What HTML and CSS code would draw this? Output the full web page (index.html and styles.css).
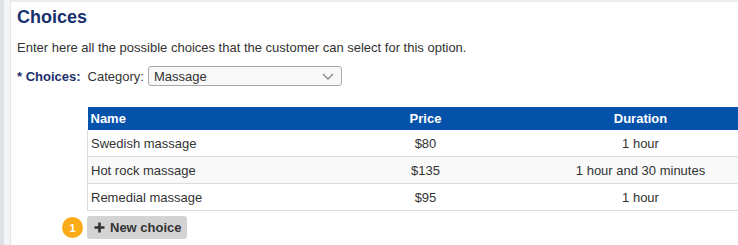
FILE: index.html
```html
<!DOCTYPE html>
<html>
<head>
<meta charset="utf-8">
<link rel="stylesheet" href="styles.css">
</head>
<body>
<div class="page">
  <div class="edge"></div>
  <div class="gutter"></div>
  <div class="panel">
    <h1 class="title">Choices</h1>
    <p class="desc">Enter here all the possible choices that the customer can select for this option.</p>
    <div class="field">
      <span class="label">* Choices:</span>
      <span class="cat">Category:</span>
      <div class="select">
        <span>Massage</span>
        <svg class="chev" width="12" height="7" viewBox="0 0 12 7"><path d="M1 1 L6 6 L11 1" fill="none" stroke="#8a8a8a" stroke-width="1.4"/></svg>
      </div>
    </div>
    <table class="choices">
      <colgroup><col class="c-name"><col class="c-price"><col class="c-dur"></colgroup>
      <thead>
        <tr><th class="left">Name</th><th>Price</th><th>Duration</th></tr>
      </thead>
      <tbody>
        <tr><td class="left">Swedish massage</td><td>$80</td><td>1 hour</td></tr>
        <tr class="alt"><td class="left">Hot rock massage</td><td>$135</td><td>1 hour and 30 minutes</td></tr>
        <tr><td class="left">Remedial massage</td><td>$95</td><td>1 hour</td></tr>
      </tbody>
    </table>
    <div class="actions">
      <span class="badge">1</span>
      <button class="btn"><svg width="11" height="11" viewBox="0 0 11 11"><path d="M5.5 0.5 V10.5 M0.5 5.5 H10.5" stroke="#333" stroke-width="2.6"/></svg><span>New choice</span></button>
    </div>
  </div>
</div>
</body>
</html>
```

FILE: styles.css
```css
html, body {
  margin: 0;
  padding: 0;
  background: #fff;
}
body {
  font-family: "Liberation Sans", Arial, sans-serif;
  font-size: 13px;
  color: #333;
  overflow: hidden;
}
.page {
  display: flex;
  width: 738px;
  height: 245px;
  overflow: hidden;
}
.edge {
  width: 4px;
  flex: none;
  background: #dfe0e5;
}
.gutter {
  width: 6px;
  flex: none;
  background: #f3f4f7;
}
.panel {
  flex: 1;
  min-width: 0;
  border-left: 1px solid #e4e5e8;
  border-top: 2px solid #ececec;
  padding-left: 6px;
  overflow: hidden;
}
.title {
  margin: 4px 0 0;
  font-size: 18px;
  line-height: 22px;
  font-weight: bold;
  color: #17306e;
}
.desc {
  margin: 11px 0 0;
  line-height: 18px;
}
.field {
  display: flex;
  align-items: center;
  margin-top: 9px;
  height: 20px;
}
.label {
  font-weight: bold;
  color: #1b2f6b;
  margin-right: 7px;
}
.cat {
  margin-right: 4px;
}
.select {
  box-sizing: border-box;
  width: 194px;
  height: 20px;
  border: 1px solid #a9a9a9;
  border-radius: 3px;
  background: #f8f8f8;
  display: flex;
  align-items: center;
  justify-content: space-between;
  padding: 0 7px 0 5px;
}
.chev {
  display: block;
}
.choices {
  margin: 21px 0 0 70px;
  border-collapse: collapse;
  table-layout: fixed;
  width: 663px;
}
.c-name { width: 233px; }
.c-price { width: 210px; }
.c-dur { width: 220px; }
.choices th {
  background: #0552ab;
  color: #fff;
  font-weight: bold;
  height: 23px;
  padding: 0 4px;
  text-align: center;
}
.choices th.left {
  padding-left: 3px;
}
.choices td {
  height: 26px;
  padding: 0 4px;
  text-align: center;
  border-bottom: 1px solid #dcdcdc;
}
.choices td.left {
  border-left: 1px solid #dcdcdc;
  padding-left: 3px;
}
.choices .left {
  text-align: left;
}
.choices tr.alt td {
  background: #f9f9f9;
}
.actions {
  display: flex;
  align-items: center;
  margin: 5px 0 0 45px;
  gap: 4px;
}
.badge {
  width: 21px;
  height: 21px;
  border-radius: 50%;
  background: #fbab18;
  color: #fff;
  font-weight: bold;
  font-size: 11px;
  display: flex;
  align-items: center;
  justify-content: center;
}
.btn {
  box-sizing: border-box;
  width: 100px;
  height: 23px;
  border: none;
  border-radius: 3px;
  background: #d3d3d3;
  color: #333;
  font-family: inherit;
  font-size: 13px;
  font-weight: bold;
  display: flex;
  align-items: center;
  gap: 5px;
  padding: 0 0 0 7px;
}
.btn svg {
  display: block;
}
```
